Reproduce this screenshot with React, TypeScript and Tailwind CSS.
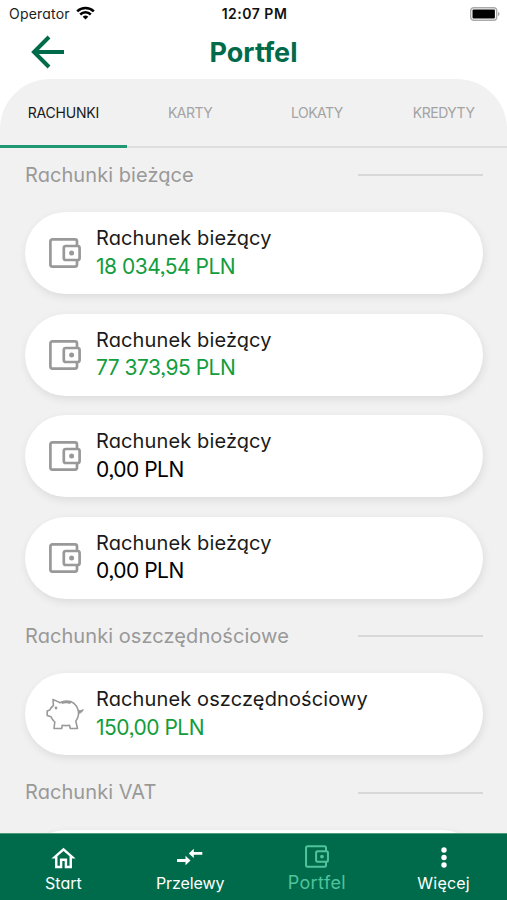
import { useState } from 'react';

interface Account {
  name: string;
  balance: string;
  positive?: boolean;
}

interface Section {
  title: string;
  icon: 'wallet' | 'piggy';
  accounts: Account[];
}

const TABS = ['RACHUNKI', 'KARTY', 'LOKATY', 'KREDYTY'];

const SECTIONS: Section[] = [
  {
    title: 'Rachunki bieżące',
    icon: 'wallet',
    accounts: [
      { name: 'Rachunek bieżący', balance: '18 034,54 PLN', positive: true },
      { name: 'Rachunek bieżący', balance: '77 373,95 PLN', positive: true },
      { name: 'Rachunek bieżący', balance: '0,00 PLN' },
      { name: 'Rachunek bieżący', balance: '0,00 PLN' },
    ],
  },
  {
    title: 'Rachunki oszczędnościowe',
    icon: 'piggy',
    accounts: [{ name: 'Rachunek oszczędnościowy', balance: '150,00 PLN', positive: true }],
  },
  {
    title: 'Rachunki VAT',
    icon: 'wallet',
    accounts: [{ name: '', balance: '' }],
  },
];

function WalletIcon({ className }: { className?: string }) {
  return (
    <svg viewBox="0 0 32 30" fill="none" stroke="currentColor" strokeWidth="2.7" className={className}>
      <path d="M28 8V3.400a2 2 0 0 0-2-2H3.400a2 2 0 0 0-2 2v23.200a2 2 0 0 0 2 2H26a2 2 0 0 0 2-2V22" />
      <rect x="14.800" y="8" width="15.800" height="14" rx="2" />
      <circle cx="22.600" cy="15" r="2.500" fill="currentColor" stroke="none" />
    </svg>
  );
}

function PiggyIcon({ className }: { className?: string }) {
  return (
    <svg viewBox="0 0 38 32" fill="none" stroke="currentColor" strokeWidth="1.6" strokeLinejoin="round" className={className}>
      <path d="M7 1.500c2.200 1.100 4.400 1.300 6.600 3.200C16 3.600 18 3 20.500 3c6 0 10.200 4 11.700 9.300 1 4-.4 8-2.400 10.800L31.500 30.500H24.300L23.500 27.200c-2.600.5-5 .5-7.200 0l-.6 3.300H8L8.800 24C7.200 22.500 5.800 21 5 18.800L1.200 17.400V13l2.600-1c.8-1.800 2-3.300 3.600-4.500z" />
      <path d="M15.500 5c3.200-1.300 6-1.300 9.200 0" strokeWidth="2.200" />
      <path d="M32.500 12.500c1.600 0 3.200.3 4.700-.9-.3 1.700-2 2.900-3.700 3.900z" fill="currentColor" strokeWidth="1" />
      <circle cx="10" cy="10" r="1.400" fill="currentColor" stroke="none" />
    </svg>
  );
}

function AccountCard({ account, icon }: { account: Account; icon: Section['icon'] }) {
  return (
    <div className="flex h-[82px] items-center rounded-full bg-white shadow-[1px_3px_9px_rgba(0,0,0,0.09)]">
      <div className="flex w-[71px] shrink-0 justify-center pl-2 text-[#999]">
        {icon === 'wallet' ? <WalletIcon className="h-[30px] w-8" /> : <PiggyIcon className="h-8 w-[38px]" />}
      </div>
      <div className="whitespace-nowrap pb-px text-[20px] leading-[28.5px]">
        <div className="h-[28.5px] tracking-[0.12px] text-[#1a1a1a]">{account.name}</div>
        <div className={account.positive ? 'text-[21px] tracking-[-0.5px] text-[#139d3d]' : 'text-[21px] tracking-[-0.5px] text-black'}>{account.balance}</div>
      </div>
    </div>
  );
}

function StatusBar() {
  return (
    <div className="grid h-7 shrink-0 grid-cols-3 items-center pb-px pl-[9px] pr-[7px] text-[14px]">
      <div className="flex items-center gap-1.5 text-[#222]">
        <span className="tracking-[0.2px]">Operator</span>
        <svg viewBox="0 0 19 14" className="mb-0.5 h-3.5 w-[19px]" fill="none" stroke="#000" strokeWidth="2.500">
          <path d="M1.200 5.300a11.800 11.800 0 0 1 16.600 0" />
          <path d="M4.200 8.500a7.500 7.500 0 0 1 10.600 0" />
          <path d="M9.500 13.600 6.700 10.800a4 4 0 0 1 5.600 0z" fill="#000" stroke="none" />
        </svg>
      </div>
      <div className="text-center font-semibold tracking-[0.5px] text-[#111]">12:07 PM</div>
      <svg viewBox="0 0 30 14" className="h-3.5 w-[30px] justify-self-end">
        <rect x="0.700" y="0.700" width="26" height="12.600" rx="3" fill="#fff" stroke="#aaa" strokeWidth="1.400" />
        <rect x="2.500" y="2.500" width="22.400" height="9" rx="1" fill="#000" />
        <path d="M28 5c2 .5 2 3.500 0 4z" fill="#aaa" />
      </svg>
    </div>
  );
}

function BottomNav() {
  return (
    <nav className="z-10 grid h-[67px] shrink-0 grid-cols-4 border-t border-[#4c9b7d] bg-[#006b4b] text-[16px] text-white">
      <a className="flex flex-col items-center">
        <svg viewBox="0 0 24 24" className="mt-2.5 h-[29px] w-[29px]" fill="currentColor">
          <path d="M12 5.690l5 4.500V18h-2v-6H9v6H7v-7.810l5-4.500M12 3L2 12h3v8h6v-6h2v6h6v-8h3L12 3z" />
        </svg>
        <span className="leading-5">Start</span>
      </a>
      <a className="flex flex-col items-center">
        <svg viewBox="0 0 26 29" className="mt-2.5 h-[29px] w-[26px]" fill="currentColor">
          <path d="M0 15.100h8.500v-3.300l5 4.700-5 4.700v-3.300H0zM25.300 8h-8.500V4.700l-5 4.700 5 4.700v-3.300h8.500z" />
        </svg>
        <span className="leading-5 tracking-[-0.1px]">Przelewy</span>
      </a>
      <a className="flex flex-col items-center text-[#4fc39b]">
        <WalletIcon className="mt-[11px] h-[23px] w-6" />
        <span className="mt-[3px] text-[18px] leading-6 tracking-[0.4px]">Portfel</span>
      </a>
      <a className="flex flex-col items-center">
        <svg viewBox="0 0 8 29" className="mt-2.5 h-[29px] w-2" fill="currentColor">
          <circle cx="4" cy="6" r="2.700" />
          <circle cx="4" cy="13.500" r="2.700" />
          <circle cx="4" cy="21" r="2.700" />
        </svg>
        <span className="leading-5 tracking-[0.2px]">Więcej</span>
      </a>
    </nav>
  );
}

export default function App() {
  const [tab, setTab] = useState(0);

  return (
    <div className="flex h-[900px] w-[507px] flex-col overflow-hidden bg-white font-['Inter',sans-serif] [font-feature-settings:'cv11','ss03']">
      <StatusBar />

      <header className="grid h-[51px] shrink-0 grid-cols-3 items-center pb-1">
        <button className="pl-[31px]">
          <svg viewBox="0 0 34 34" className="h-[34px] w-[34px]" fill="none" stroke="#006b4b" strokeWidth="4">
            <path d="M18 2 3 17l15 15M2.500 17h30.500" />
          </svg>
        </button>
        <h1 className="pt-0.5 text-center text-[27px] font-bold leading-8 text-[#006b4b]">Portfel</h1>
      </header>

      <main className="flex min-h-0 flex-1 flex-col overflow-hidden rounded-t-[50px] bg-[#f1f1f1]">
        <div className="grid h-[69px] shrink-0 grid-cols-4 border-b-2 border-[#dedede]">
          {TABS.map((t, i) => (
            <button key={t} onClick={() => setTab(i)}
              className={i === tab
                ? '-mb-0.5 border-b-[3px] border-[#1f9873] text-[14px] tracking-[-0.2px] text-[#1a1a1a]'
                : '-mb-0.5 border-b-[3px] border-transparent text-[14px] tracking-[-0.5px] text-[#a3a3a3]'}>
              {t}
            </button>
          ))}
        </div>

        <div className="min-h-0 flex-1 overflow-hidden pl-[25px] pr-[24.5px] pt-3">
          {SECTIONS.map(s => (
            <section key={s.title} className="mb-[22.5px]">
              <div className="mb-[22px] flex h-[30px] items-center justify-between">
                <h2 className="whitespace-nowrap pb-px text-[20px] tracking-[0.07px] text-[#999]">{s.title}</h2>
                <div className="h-0.5 w-[125px] bg-[#d8d8d8]" />
              </div>
              <div className="flex flex-col gap-[19.500px]">
                {s.accounts.map((a, i) => <AccountCard key={i} account={a} icon={s.icon} />)}
              </div>
            </section>
          ))}
        </div>
      </main>

      <BottomNav />
    </div>
  );
}
